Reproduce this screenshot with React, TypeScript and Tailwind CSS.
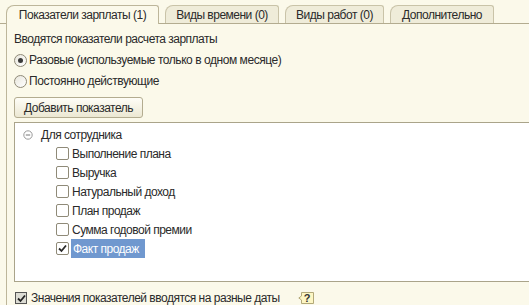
import React from "react";

const font = { fontFamily: '"Liberation Sans", Arial, sans-serif', letterSpacing: "-0.5px" };

function Tab({ label, active, w }: { label: string; active?: boolean; w: number }) {
  return (
    <div
      style={{ width: w }}
      className={
        active
          ? "h-[19px] mb-[-1px] border border-b-0 border-[#bdb69a] rounded-tl-[8px] rounded-tr-[3px] bg-[#fbf9ea] flex items-center justify-center text-[12px] text-[#2a2a2a]"
          : "h-[18px] border border-b-0 border-[#c9c3a8] rounded-tl-[8px] rounded-tr-[3px] bg-[#efecd9] flex items-center justify-center text-[12px] text-[#2a2a2a]"
      }
    >
      {label}
    </div>
  );
}

function Radio({ checked, label }: { checked?: boolean; label: string }) {
  return (
    <div className="h-[14px] flex items-center">
      <div className="w-[13px] h-[13px] rounded-full border border-[#8f8a78] bg-gradient-to-br from-[#e8e6dc] to-white flex items-center justify-center">
        {checked && <div className="w-[5px] h-[5px] rounded-full bg-[#3a3a3a]" />}
      </div>
      <span className="ml-[2px] text-[12px] text-[#2a2a2a] leading-[14px] tracking-[-0.45px]">{label}</span>
    </div>
  );
}

function Check({ checked }: { checked?: boolean }) {
  return (
    <div className="w-[13px] h-[13px] rounded-[2px] border border-[#8f8a78] bg-white flex items-center justify-center">
      {checked && (
        <svg width="9" height="9" viewBox="0 0 9 9">
          <path d="M1 4.5 L3.5 7 L8 1.5" fill="none" stroke="#2a2a2a" strokeWidth="1.8" />
        </svg>
      )}
    </div>
  );
}

function Item({ label, checked, selected }: { label: string; checked?: boolean; selected?: boolean }) {
  return (
    <div className="h-[19px] flex items-center pl-[41px]">
      <Check checked={checked} />
      <span
        className={
          selected
            ? "ml-[2px] h-[19px] pl-[2px] pr-[6px] flex items-center bg-[#7098cf] text-white text-[12px]"
            : "ml-[3px] text-[12px] text-[#2a2a2a]"
        }
      >
        {label}
      </span>
    </div>
  );
}

export default function App() {
  return (
    <div style={font} className="w-[529px] h-[305px] bg-[#fbf9ea] overflow-hidden">
      <div className="h-[24px] pt-[5px] pl-[6px] flex items-end gap-[6px] border-b border-[#b3ac90]">
        <Tab label="Показатели зарплаты (1)" active w={153} />
        <Tab label="Виды времени (0)" w={114} />
        <Tab label="Виды работ (0)" w={99} />
        <Tab label="Дополнительно" w={104} />
      </div>
      <div className="ml-[6px] border-l border-[#bdb69a] pl-[7px] h-[281px] overflow-hidden">
        <div className="mt-[8px] h-[14px] leading-[14px] text-[12px] text-[#2a2a2a]">
          Вводятся показатели расчета зарплаты
        </div>
        <div className="mt-[7px]">
          <Radio checked label="Разовые (используемые только в одном месяце)" />
        </div>
        <div className="mt-[7px]">
          <Radio label="Постоянно действующие" />
        </div>
        <div className="mt-[9px] w-[129px] h-[21px] rounded-[3px] border border-[#b3ac90] bg-gradient-to-b from-[#fefdf7] to-[#ece8d3] flex items-center justify-center text-[12px] text-[#2a2a2a]">
          Добавить показатель
        </div>
        <div className="mt-[4px] w-[530px] h-[160px] border border-[#aaa48a] bg-white pt-[2px]">
          <div className="h-[19px] flex items-center pl-[8px]">
            <svg width="10" height="10" viewBox="0 0 10 10">
              <circle cx="5" cy="5" r="4.2" fill="#fff" stroke="#9a9a9a" strokeWidth="1" />
              <path d="M2.8 5 H7.2" stroke="#777" strokeWidth="1" />
            </svg>
            <span className="ml-[8px] text-[12px] text-[#2a2a2a]">Для сотрудника</span>
          </div>
          <Item label="Выполнение плана" />
          <Item label="Выручка" />
          <Item label="Натуральный доход" />
          <Item label="План продаж" />
          <Item label="Сумма годовой премии" />
          <Item label="Факт продаж" checked selected />
        </div>
        <div className="mt-[9px] h-[14px] flex items-center pl-[1px]">
          <div className="w-[12px] h-[12px] border border-[#555] bg-[#dcdcd4] flex items-center justify-center">
            <svg width="9" height="9" viewBox="0 0 9 9">
              <path d="M1 4.5 L3.5 7 L8 1.5" fill="none" stroke="#222" strokeWidth="1.8" />
            </svg>
          </div>
          <span className="ml-[4px] text-[12px] text-[#2a2a2a]">Значения показателей вводятся на разные даты</span>
          <div className="ml-[18px] relative w-[16px] h-[12px]">
            <svg width="16" height="12" viewBox="0 0 16 12" className="absolute inset-0">
              <path d="M3.5 0.5 H15.5 V11.5 H3.5 L3.5 8 L0.8 6 L3.5 4 Z" fill="#fdf6c4" stroke="#b3a978" strokeWidth="1" />
            </svg>
            <span className="absolute left-[6px] top-[-2px] text-[11px] font-bold text-[#333]">?</span>
          </div>
        </div>
      </div>
    </div>
  );
}
